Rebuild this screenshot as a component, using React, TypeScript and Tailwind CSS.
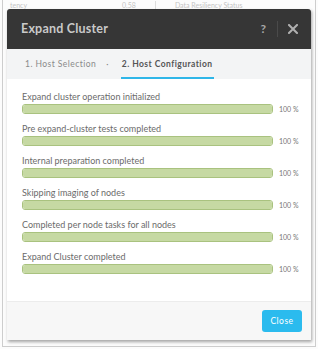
// Expand Cluster — diálogo de progreso con pasos completados.

const steps = [
  'Expand cluster operation initialized',
  'Pre expand-cluster tests completed',
  'Internal preparation completed',
  'Skipping imaging of nodes',
  'Completed per node tasks for all nodes',
  'Expand Cluster completed',
]

// ─── Barra de progreso de un paso ────────────────────────────────────────────

function StepRow({ label, pct }: { label: string; pct: number }) {
  return (
    <div className="flex flex-col">
      <div className="h-[12px] text-[9px] leading-[12px] text-[#6b6b6b] whitespace-nowrap">{label}</div>
      <div className="mt-[1px] flex items-center">
        <div className="h-[10px] w-[251px] rounded-[3px] border border-[#a9c27f] bg-[#edf3e3] overflow-hidden">
          <div className="h-full bg-[#c6d9a3]" style={{ width: `${pct}%` }} />
        </div>
        <span className="ml-[6px] text-[7px] leading-[10px] text-[#777]">{pct} %</span>
      </div>
    </div>
  )
}

export default function App() {
  return (
    <div
      className="w-[318px] h-[349px] bg-[#fcfcfc] px-[2px] pb-[2px] overflow-hidden"
      style={{ fontFamily: 'Lato, "Open Sans", sans-serif' }}
    >
      <div className="h-full border-x border-b border-[#cdcdcd] px-[4px] flex flex-col">
        {/* Página de fondo, casi tapada por el diálogo */}
        <div className="h-[9px] overflow-hidden flex items-end text-[7px] leading-[8px] text-[#c4c4c4] pl-[3px]">
          <span>tency</span>
          <span className="ml-[95px]">0.58</span>
          <span className="ml-[19px] w-px h-[8px] bg-[#ddd]" />
          <span className="ml-[19px]">Data Resiliency Status</span>
        </div>

        {/* Diálogo */}
        <div className="w-[304px] flex flex-col bg-white shadow-[1px_2px_3px_rgba(0,0,0,0.35)]">
          {/* Cabecera */}
          <div className="h-[40px] bg-[#363636] flex items-center pl-[14px] rounded-t-[3px]">
            <span className="text-[12.5px] font-bold text-[#c9c9c9] tracking-[0.2px]">Expand Cluster</span>
            <div className="ml-auto flex items-center h-full">
              <span className="text-[12px] font-bold text-[#a8a8a8] mr-[11px]">?</span>
              <div className="w-px h-[16px] bg-[#4a4a4a]" />
              <svg width="10" height="10" viewBox="0 0 10 10" className="ml-[10px] mr-[13px]">
                <path d="M1 1 L9 9 M9 1 L1 9" stroke="#b0b0b0" strokeWidth="2" strokeLinecap="square" />
              </svg>
            </div>
          </div>

          {/* Pestañas del asistente */}
          <div className="h-[30px] bg-[#f3f4f5] flex items-stretch pl-[18px] text-[8.5px] tracking-[0.45px]">
            <span className="flex items-center text-[#8a8a8a]">1. Host Selection</span>
            <span className="flex items-center ml-[10px] mr-[12px] text-[#8a8a8a]">·</span>
            <span className="flex items-center font-bold text-[#555] border-b-2 border-[#2fb6e8] pt-[2px] px-px">
              2. Host Configuration
            </span>
          </div>

          {/* Lista de pasos */}
          <div className="flex flex-col gap-[9px] pl-[15px] pt-[12px] pb-[27px]">
            {steps.map((s) => (
              <StepRow key={s} label={s} pct={100} />
            ))}
          </div>

          {/* Pie */}
          <div className="h-[39px] border-t border-[#ececec] bg-[#f7f7f7] flex items-center justify-end pr-[9px]">
            <button className="h-[22px] w-[40px] rounded-[3px] bg-[#2bbbee] text-white text-[8.5px] tracking-[0.5px]">
              Close
            </button>
          </div>
        </div>
      </div>
    </div>
  )
}
